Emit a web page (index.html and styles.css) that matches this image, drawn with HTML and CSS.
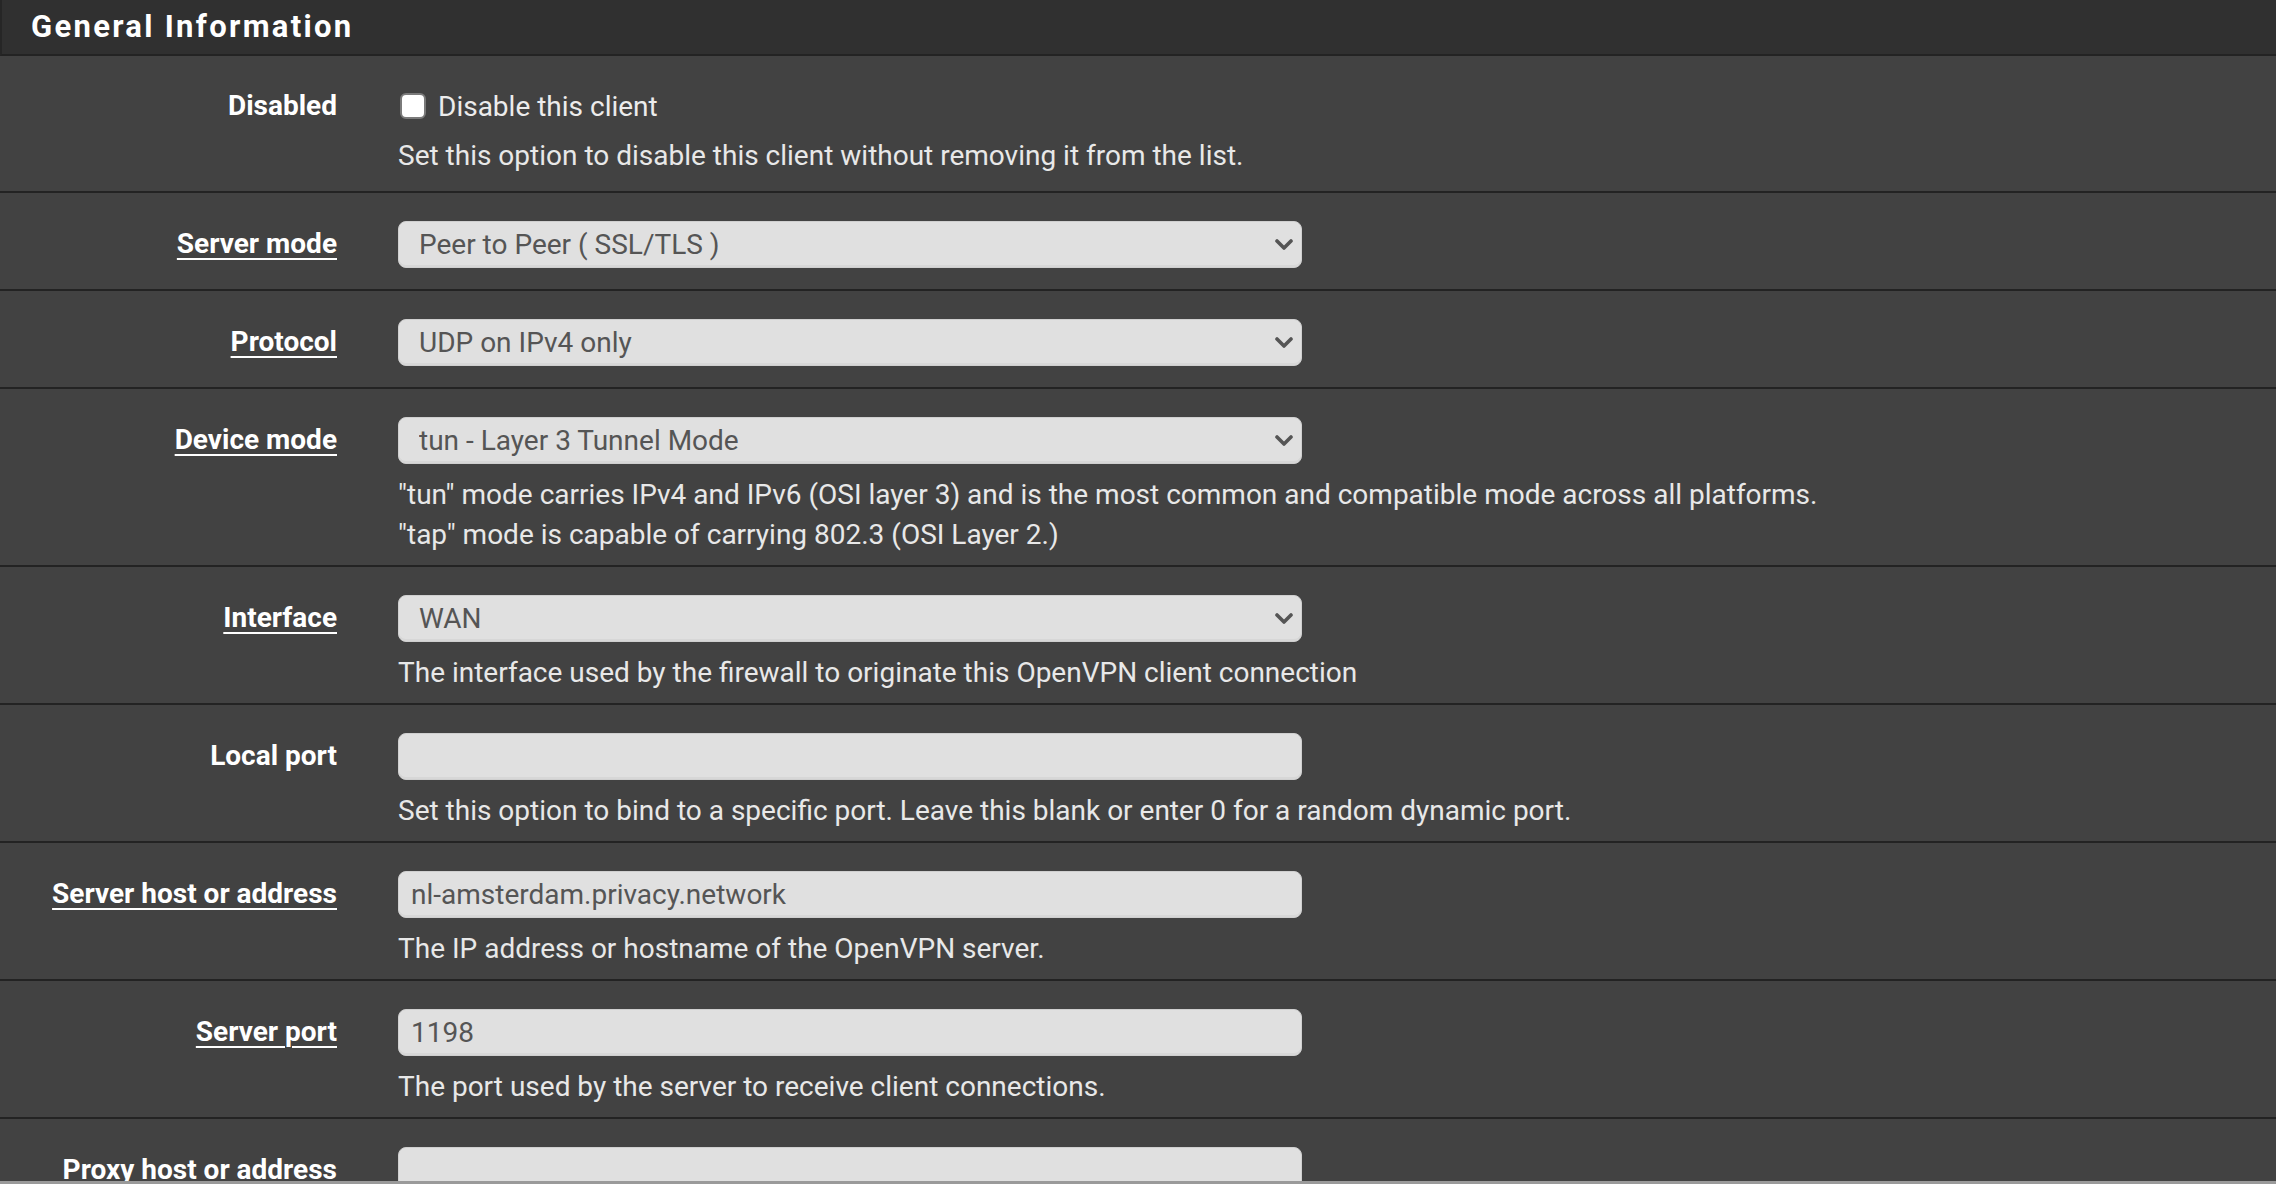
FILE: index.html
```html
<!DOCTYPE html>
<html lang="en">
<head>
<meta charset="utf-8">
<title>OpenVPN Client - General Information</title>
<link rel="stylesheet" href="styles.css">
</head>
<body>
<div class="page">
  <div class="panel">
    <div class="panel-heading">
      <h2 class="panel-title">General Information</h2>
    </div>
    <div class="panel-body">

      <div class="form-row form-row-check">
        <div class="label-col"><span class="lbl">Disabled</span></div>
        <div class="ctrl-col">
          <label class="check-line"><span class="checkbox"></span><span>Disable this client</span></label>
          <div class="help">Set this option to disable this client without removing it from the list.</div>
        </div>
      </div>

      <div class="form-row">
        <div class="label-col"><a class="lbl link">Server mode</a></div>
        <div class="ctrl-col">
          <div class="select-wrap">
            <select class="control"><option>Peer to Peer ( SSL/TLS )</option></select>
            <svg class="chev" viewBox="0 0 18 11" width="18" height="11"><polyline points="2,2 9,9 16,2" /></svg>
          </div>
        </div>
      </div>

      <div class="form-row">
        <div class="label-col"><a class="lbl link">Protocol</a></div>
        <div class="ctrl-col">
          <div class="select-wrap">
            <select class="control"><option>UDP on IPv4 only</option></select>
            <svg class="chev" viewBox="0 0 18 11" width="18" height="11"><polyline points="2,2 9,9 16,2" /></svg>
          </div>
        </div>
      </div>

      <div class="form-row">
        <div class="label-col"><a class="lbl link">Device mode</a></div>
        <div class="ctrl-col">
          <div class="select-wrap">
            <select class="control"><option>tun - Layer 3 Tunnel Mode</option></select>
            <svg class="chev" viewBox="0 0 18 11" width="18" height="11"><polyline points="2,2 9,9 16,2" /></svg>
          </div>
          <div class="help">"tun" mode carries IPv4 and IPv6 (OSI layer 3) and is the most common and compatible mode across all platforms.<br>"tap" mode is capable of carrying 802.3 (OSI Layer 2.)</div>
        </div>
      </div>

      <div class="form-row">
        <div class="label-col"><a class="lbl link">Interface</a></div>
        <div class="ctrl-col">
          <div class="select-wrap">
            <select class="control"><option>WAN</option></select>
            <svg class="chev" viewBox="0 0 18 11" width="18" height="11"><polyline points="2,2 9,9 16,2" /></svg>
          </div>
          <div class="help">The interface used by the firewall to originate this OpenVPN client connection</div>
        </div>
      </div>

      <div class="form-row">
        <div class="label-col"><span class="lbl">Local port</span></div>
        <div class="ctrl-col">
          <input class="control input" type="text" value="">
          <div class="help">Set this option to bind to a specific port. Leave this blank or enter 0 for a random dynamic port.</div>
        </div>
      </div>

      <div class="form-row">
        <div class="label-col"><a class="lbl link">Server host or address</a></div>
        <div class="ctrl-col">
          <input class="control input" type="text" value="nl-amsterdam.privacy.network">
          <div class="help">The IP address or hostname of the OpenVPN server.</div>
        </div>
      </div>

      <div class="form-row">
        <div class="label-col"><a class="lbl link">Server port</a></div>
        <div class="ctrl-col">
          <input class="control input" type="text" value="1198">
          <div class="help">The port used by the server to receive client connections.</div>
        </div>
      </div>

      <div class="form-row">
        <div class="label-col"><span class="lbl">Proxy host or address</span></div>
        <div class="ctrl-col">
          <input class="control input" type="text" value="">
        </div>
      </div>

    </div>
  </div>
  <div class="bottom-edge"></div>
</div>
</body>
</html>
```

FILE: styles.css
```css
* { box-sizing: border-box; }

html, body {
  margin: 0;
  padding: 0;
  background: #424242;
}

body {
  font-family: Roboto, "Liberation Sans", Arial, sans-serif;
  font-size: 28px;
  color: #e8e8e8;
}

.page {
  height: 1184px;
  display: flex;
  flex-direction: column;
  overflow: hidden;
}

.panel {
  flex: 1;
  overflow: hidden;
  background: #424242;
}

.bottom-edge {
  height: 3px;
  background: #9a9a9a;
  flex: none;
}

.panel-heading {
  height: 56px;
  background: #303030;
  border-left: 2px solid #262626;
  border-bottom: 2px solid #232323;
  display: flex;
  align-items: center;
  padding-left: 29px;
}

.panel-title {
  margin: 0;
  font-size: 31px;
  font-weight: 700;
  letter-spacing: 2.3px;
  color: #ffffff;
  line-height: 40px;
}

.form-row {
  display: flex;
  align-items: flex-start;
  border-bottom: 2px solid #232323;
  padding: 28px 0 10px;
}

.form-row-check {
  padding-top: 30px;
  padding-bottom: 15px;
}

.label-col {
  width: 337px;
  flex: none;
  text-align: right;
  line-height: 40px;
  padding-top: 3px;
}

.form-row-check .label-col {
  padding-top: 0;
}

.lbl {
  font-weight: 700;
  color: #ffffff;
  white-space: nowrap;
}

.lbl.link {
  text-decoration: underline;
  text-decoration-thickness: 2px;
  text-underline-offset: 5px;
  cursor: pointer;
}

.ctrl-col {
  flex: 1;
  margin-left: 61px;
  min-width: 0;
}

.check-line {
  display: flex;
  align-items: center;
  height: 40px;
  margin-bottom: 10px;
  color: #ececec;
}

.checkbox {
  width: 26px;
  height: 26px;
  border: 2px solid #7a7a7a;
  border-radius: 6px;
  background: #ffffff;
  margin: 0 12px 0 2px;
  flex: none;
}

.select-wrap {
  position: relative;
  width: 904px;
  margin-bottom: 11px;
}

.control {
  display: block;
  width: 904px;
  height: 47px;
  margin: 0;
  border: 1px solid #cfcfcf;
  border-radius: 8px;
  background: #e0e0e0;
  color: #555555;
  font-family: Roboto, "Liberation Sans", Arial, sans-serif;
  font-size: 28px;
  box-shadow: inset 0 -2px 0 rgba(0,0,0,0.04);
  outline: none;
}

select.control {
  -webkit-appearance: none;
  appearance: none;
  padding: 0 40px 0 20px;
}

.input {
  padding: 0 12px;
  margin-bottom: 11px;
}

.chev {
  position: absolute;
  right: 9px;
  top: 18px;
  pointer-events: none;
}

.chev polyline {
  fill: none;
  stroke: #555555;
  stroke-width: 3.6;
  stroke-linecap: round;
  stroke-linejoin: round;
}

.help {
  line-height: 40px;
  color: #e8e8e8;
  white-space: nowrap;
}
```
